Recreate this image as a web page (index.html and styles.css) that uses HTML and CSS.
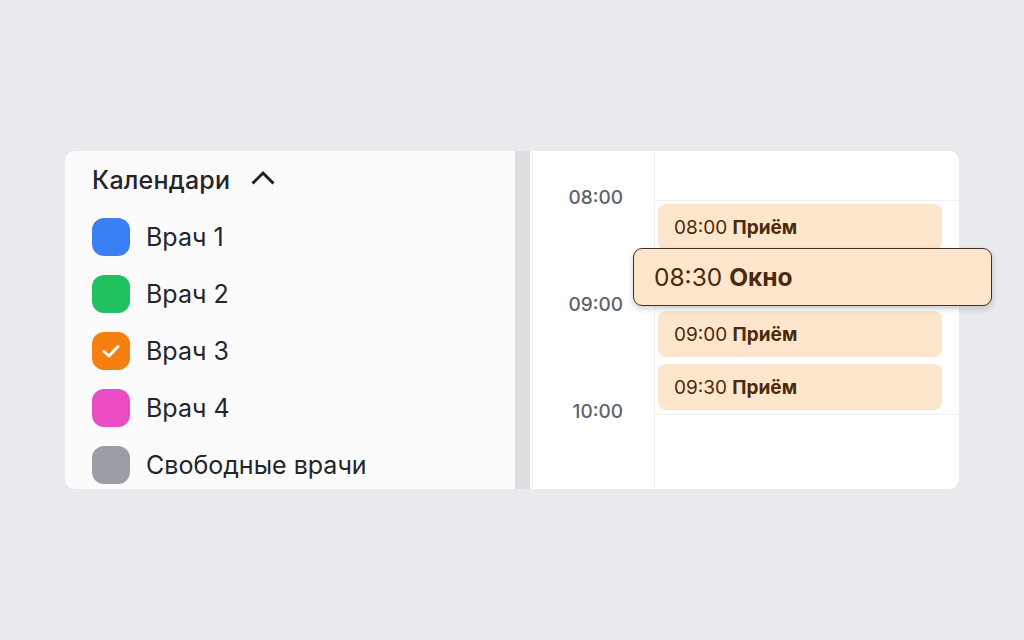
FILE: index.html
```html
<!DOCTYPE html>
<html lang="ru">
<head>
<meta charset="utf-8">
<title>Календари</title>
<link rel="stylesheet" href="styles.css">
</head>
<body>
<div class="card">
  <aside class="calendars">
    <div class="calendars-head">
      <span class="calendars-title">Календари</span>
      <svg class="chevron" width="26" height="16" viewBox="0 0 26 16"><path d="M2.5 13.5 L13 3 L23.5 13.5" fill="none" stroke="#222" stroke-width="3"/></svg>
    </div>
    <ul class="cal-list">
      <li class="cal-item"><span class="swatch swatch-blue"></span>Врач 1</li>
      <li class="cal-item"><span class="swatch swatch-green"></span>Врач 2</li>
      <li class="cal-item"><span class="swatch swatch-orange"><svg width="20" height="16" viewBox="0 0 20 16"><path d="M3 8.5 L8 13 L17 3.5" fill="none" stroke="#fff" stroke-width="3" stroke-linecap="round" stroke-linejoin="round"/></svg></span>Врач 3</li>
      <li class="cal-item"><span class="swatch swatch-pink"></span>Врач 4</li>
      <li class="cal-item"><span class="swatch swatch-gray"></span>Свободные врачи</li>
    </ul>
  </aside>
  <div class="splitter"></div>
  <section class="day">
    <div class="grid">
      <div class="time-cell"></div>
      <div class="slot-cell"></div>

      <div class="time-cell"><span class="time-label">08:00</span></div>
      <div class="slot-cell">
        <div class="event"><span class="ev-time">08:00</span> <b>Приём</b></div>
        <!-- slot freed by the event that is being dragged -->
        <div class="event placeholder"></div>
      </div>

      <div class="time-cell"><span class="time-label">09:00</span></div>
      <div class="slot-cell">
        <div class="event"><span class="ev-time">09:00</span> <b>Приём</b></div>
        <div class="event"><span class="ev-time">09:30</span> <b>Приём</b></div>
      </div>

      <div class="time-cell"><span class="time-label">10:00</span></div>
      <div class="slot-cell"></div>
    </div>
    <div class="drag-ghost"><span class="ev-time">08:30</span> <b>Окно</b></div>
  </section>
</div>
</body>
</html>
```

FILE: styles.css
```css
* { box-sizing: border-box; }

html, body {
  margin: 0;
  height: 100%;
}

body {
  background: #e9eaed;
  display: flex;
  align-items: center;
  justify-content: center;
  font-family: "Inter", "Noto Sans", sans-serif;
  color: #23252a;
}

.card {
  width: 894px;
  height: 338px;
  display: flex;
  background: #ffffff;
  border-radius: 10px;
}

/* left: list of calendars */
.calendars {
  width: 450px;
  background: #fbfbfb;
  border-radius: 10px 0 0 10px;
  padding: 12px 0 0 27px;
  overflow: hidden;
}

.calendars-head {
  display: flex;
  align-items: center;
  gap: 20px;
  height: 33px;
}

.calendars-title {
  font-size: 25px;
  font-weight: 500;
  letter-spacing: 0.2px;
}

.chevron { margin-top: -3px; }

.cal-list {
  list-style: none;
  margin: 22px 0 0;
  padding: 0;
  display: flex;
  flex-direction: column;
  gap: 19px;
}

.cal-item {
  display: flex;
  align-items: center;
  gap: 16px;
  height: 38px;
  font-size: 25px;
  font-weight: 400;
}

.swatch {
  width: 38px;
  height: 38px;
  border-radius: 12px;
  flex: none;
  display: flex;
  align-items: center;
  justify-content: center;
}

.swatch-blue { background: #3b80f2; }
.swatch-green { background: #1fc25f; }
.swatch-orange { background: #f5800f; }
.swatch-pink { background: #ea4cc2; }
.swatch-gray { background: #9b9ea6; }

.splitter {
  width: 15px;
  background: #dcdddf;
}

/* right: day grid */
.day {
  flex: 1;
  position: relative;
  padding-left: 2px;
  border-radius: 0 10px 10px 0;
}

.grid {
  height: 100%;
  overflow: hidden;
  border-left: 1px solid #f0f1f3;
  border-radius: 0 10px 10px 0;
  display: grid;
  grid-template-columns: 122px 1fr;
  grid-template-rows: 50px 107px 107px 1fr;
}

.time-cell {
  border-right: 1px solid #eef0f2;
  text-align: right;
  padding-right: 31px;
}

.slot-cell {
  border-bottom: 1px solid #eef0f2;
  padding: 3px 17px 4px 3px;
  display: flex;
  flex-direction: column;
  gap: 7px;
}

.slot-cell:last-child { border-bottom: none; }

.time-label {
  display: block;
  margin-top: -14px;
  font-size: 19px;
  line-height: 22px;
  font-weight: 500;
  color: #5e636d;
}

.event {
  height: 46px;
  border-radius: 8px;
  background: #fde6cc;
  color: #4b2a0c;
  font-size: 19px;
  line-height: 47px;
  padding-left: 16px;
  white-space: nowrap;
}

.event b, .drag-ghost b { font-weight: 700; }

/* event being dragged, floating above the grid */
.drag-ghost {
  position: absolute;
  left: 103px;
  top: 97px;
  width: 359px;
  height: 58px;
  border: 1.5px solid #3e3328;
  border-radius: 9px;
  background: #fde6cc;
  color: #4b2a0c;
  font-size: 24.5px;
  line-height: 56px;
  padding-left: 20px;
  white-space: nowrap;
  box-shadow: 0 3px 6px rgba(0, 0, 0, 0.18);
}
```
